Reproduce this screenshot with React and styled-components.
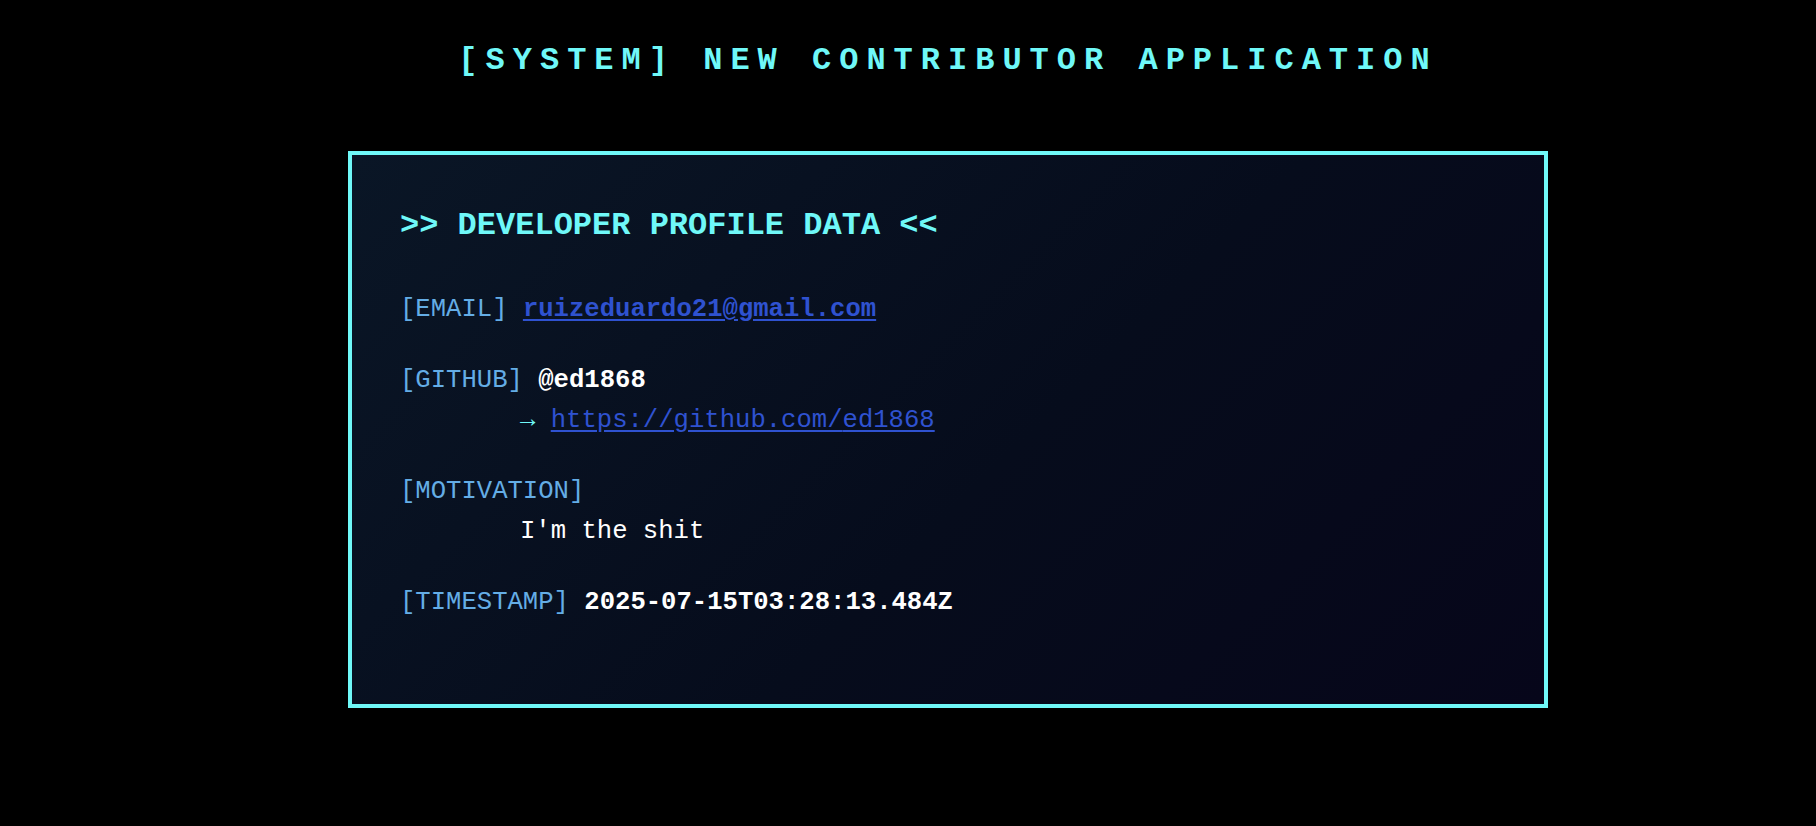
import React from 'react'
import styled, { createGlobalStyle } from 'styled-components'

const GlobalStyle = createGlobalStyle`
    html, body {
        margin: 0;
        padding: 0;
        background: #000;
    }
    body {
        font-family: "Liberation Mono", "Courier New", monospace;
    }
`

const StyledPage = styled.div`
    display: flex;
    flex-direction: column;
    align-items: center;
    min-height: 826px;
    padding: 41px 0 0 80px;
    box-sizing: border-box;
    background: #000;
`

const StyledTitle = styled.h1`
    margin: 0;
    font-size: 32px;
    line-height: 40px;
    font-weight: 700;
    letter-spacing: 8px;
    color: #6ff8f8;
    white-space: nowrap;
`

const StyledTerminal = styled.section`
    box-sizing: border-box;
    width: 1200px;
    margin-top: 70px;
    padding: 51px 48px 48px;
    border: 4px solid #6ff8f8;
    background: linear-gradient(135deg, #0a1626 0%, #060c1c 55%, #06061a 100%);
`

const StyledHeading = styled.h2`
    margin: 0 0 44px;
    font-size: 32px;
    line-height: 40px;
    font-weight: 700;
    color: #6ff8f8;
    white-space: pre;
`

const StyledField = styled.div`
    margin-bottom: 31px;
    font-size: 25.6px;
    line-height: 40px;
    white-space: pre;

    &:last-child {
        margin-bottom: 33px;
    }
`

const StyledLine = styled.div`
    padding-left: ${({ indent }) => indent || 0}px;
`

const StyledLabel = styled.span`
    color: #64ade6;
`

const StyledValue = styled.span`
    color: #fff;
    font-weight: ${({ bold }) => bold ? 700 : 400};
`

const StyledLink = styled.a`
    color: #2f52d0;
    font-weight: ${({ bold }) => bold ? 700 : 400};
    text-decoration: underline;
    text-underline-offset: 3px;
`

const StyledArrow = styled.span`
    color: #6ff8f8;
`

const profile = {
    email: 'ruizeduardo21@gmail.com',
    github: 'ed1868',
    motivation: "I'm the shit",
    timestamp: '2025-07-15T03:28:13.484Z',
}

export default () => {
    return <>
        <GlobalStyle />
        <StyledPage>
            <StyledTitle>[SYSTEM] NEW CONTRIBUTOR APPLICATION</StyledTitle>
            <StyledTerminal>
                <StyledHeading>{'>> DEVELOPER PROFILE DATA <<'}</StyledHeading>

                <StyledField>
                    <StyledLabel>[EMAIL]</StyledLabel>{' '}
                    <StyledLink bold href={`mailto:${profile.email}`}>{profile.email}</StyledLink>
                </StyledField>

                <StyledField>
                    <StyledLine>
                        <StyledLabel>[GITHUB]</StyledLabel>{' '}
                        <StyledValue bold>@{profile.github}</StyledValue>
                    </StyledLine>
                    <StyledLine indent={120}>
                        <StyledArrow>→</StyledArrow>{' '}
                        <StyledLink href={`https://github.com/${profile.github}`}>https://github.com/{profile.github}</StyledLink>
                    </StyledLine>
                </StyledField>

                <StyledField>
                    <StyledLine>
                        <StyledLabel>[MOTIVATION]</StyledLabel>
                    </StyledLine>
                    <StyledLine indent={120}>
                        <StyledValue>{profile.motivation}</StyledValue>
                    </StyledLine>
                </StyledField>

                <StyledField>
                    <StyledLabel>[TIMESTAMP]</StyledLabel>{' '}
                    <StyledValue bold>{profile.timestamp}</StyledValue>
                </StyledField>
            </StyledTerminal>
        </StyledPage>
    </>
}
